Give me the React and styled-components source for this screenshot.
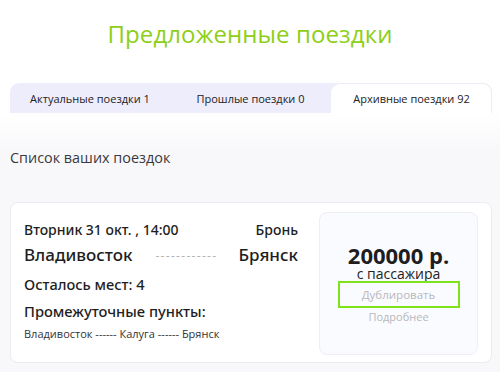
import React from "react";
import styled, { createGlobalStyle } from "styled-components";

const GlobalStyle = createGlobalStyle`
	html, body {
		margin: 0;
		padding: 0;
		background: #ffffff;
		font-family: "Open Sans", "Noto Sans", sans-serif;
		color: #1e1e22;
	}
`;

const tabs = [
	{ label: "Актуальные поездки", count: 1 },
	{ label: "Прошлые поездки", count: 0 },
	{ label: "Архивные поездки", count: 92, active: true },
];

const App = () => {
	return (
		<Page>
			<GlobalStyle />
			<Title>Предложенные поездки</Title>
			<TabBar>
				{tabs.map((t) => (
					<Tab key={t.label} $active={t.active}>
						{t.label} {t.count}
					</Tab>
				))}
			</TabBar>
			<Body>
				<ListTitle>Список ваших поездок</ListTitle>
				<Card>
					<Info>
						<Row>
							<DateText>Вторник 31 окт. , 14:00</DateText>
							<DateText>Бронь</DateText>
						</Row>
						<Row>
							<City>Владивосток</City>
							<Dashes>------------</Dashes>
							<City>Брянск</City>
						</Row>
						<Seats>Осталось мест: 4</Seats>
						<StopsTitle>Промежуточные пункты:</StopsTitle>
						<Stops>Владивосток ------ Калуга ------ Брянск</Stops>
					</Info>
					<PriceBox>
						<Price>200000 р.</Price>
						<PerPassenger>с пассажира</PerPassenger>
						<Duplicate>Дублировать</Duplicate>
						<More>Подробнее</More>
					</PriceBox>
				</Card>
			</Body>
		</Page>
	);
};

export default App;

const Page = styled.div`
	width: 500px;
	height: 372px;
	overflow: hidden;
	display: flex;
	flex-direction: column;
`;

const Title = styled.h1`
	margin: 0;
	padding-top: 17px;
	height: 83px;
	box-sizing: border-box;
	text-align: center;
	font-size: 24px;
	font-weight: 500;
	color: #8dcf17;
	letter-spacing: 0.1px;
`;

const TabBar = styled.div`
	margin: 0 8px 0 10px;
	display: grid;
	grid-template-columns: 160px 161px 1fr;
	height: 30px;
	flex-shrink: 0;
	background: #eeedfc;
	border-radius: 9px 9px 0 0;
`;

const Tab = styled.div`
	display: flex;
	align-items: center;
	justify-content: center;
	font-size: 11px;
	color: #222;
	background: ${(p) => (p.$active ? "#ffffff" : "transparent")};
	border-radius: 9px 9px 0 0;
	box-shadow: ${(p) => (p.$active ? "inset 0 1px 0 #ececf4, inset -1px 0 0 #ececf4" : "none")};
`;

const Body = styled.div`
	flex: 1;
	background: linear-gradient(#ffffff, #f8f8fb 40px);
	padding: 35px 8px 0 10px;
`;

const ListTitle = styled.div`
	font-size: 14.4px;
	color: #3a3a3e;
	height: 54px;
`;

const Card = styled.div`
	display: flex;
	justify-content: space-between;
	background: #ffffff;
	border: 1px solid #ebebf2;
	border-radius: 8px;
	padding: 9px 13px 7px 13px;
	height: 161px;
	flex-shrink: 0;
	box-sizing: border-box;
`;

const Info = styled.div`
	width: 274px;
	padding-top: 9px;
	display: flex;
	flex-direction: column;
	font-family: "Noto Sans", "Open Sans", sans-serif;
`;

const Row = styled.div`
	display: flex;
	justify-content: space-between;
	align-items: center;
`;

const DateText = styled.span`
	font-size: 14px;
	font-weight: 500;
	line-height: 18px;
`;

const City = styled.span`
	font-size: 17px;
	font-weight: 500;
	line-height: 32px;
`;

const Dashes = styled.span`
	font-size: 12px;
	color: #b4b4ba;
	letter-spacing: 1.3px;
	margin-left: 2px;
`;

const Seats = styled.div`
	font-size: 14.6px;
	font-weight: 500;
	margin-top: 1px;
	line-height: 24px;
`;

const StopsTitle = styled.div`
	font-size: 14.7px;
	font-weight: 500;
	margin-top: 4px;
	line-height: 22px;
`;

const Stops = styled.div`
	font-family: "Open Sans", sans-serif;
	font-size: 11px;
	color: #333;
	margin-top: 4px;
`;

const PriceBox = styled.div`
	width: 159px;
	box-sizing: border-box;
	border: 1px solid #eeeef5;
	border-radius: 8px;
	background: #fafbfe;
	display: flex;
	flex-direction: column;
	align-items: center;
	padding-top: 30px;
`;

const Price = styled.div`
	font-size: 22px;
	font-weight: 700;
	line-height: 24px;
`;

const PerPassenger = styled.div`
	font-size: 14px;
	line-height: 14px;
	color: #222;
`;

const Duplicate = styled.div`
	width: 122px;
	height: 27px;
	box-sizing: border-box;
	border: 2px solid #7ee31a;
	display: flex;
	align-items: center;
	justify-content: center;
	font-size: 11.5px;
	color: #b8b8bc;
	margin-top: 0;
`;

const More = styled.div`
	font-size: 11px;
	color: #b8b8bc;
	margin-top: 1px;
`;
